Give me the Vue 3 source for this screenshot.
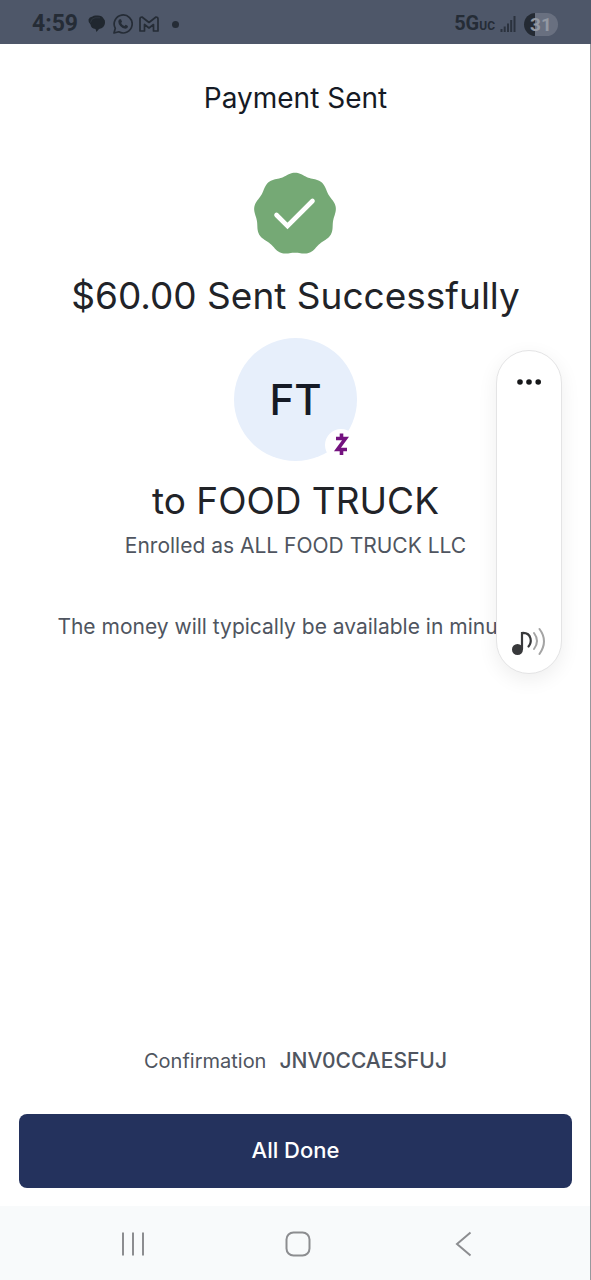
<script setup>
// Nine-lobed seal outline, sampled around the centre of an 84x84 view box
const points = []
for (let i = 0; i < 180; i++) {
  const a = (i / 180) * Math.PI * 2
  const r = 40 + 1.3 * Math.cos(9 * a)
  points.push(`${(41 + r * Math.sin(a)).toFixed(2)} ${(42 - r * Math.cos(a)).toFixed(2)}`)
}
const sealPath = `M${points.join('L')}Z`
</script>

<template>
  <div class="screen">
    <header class="status">
      <span class="time">4:59</span>
      <svg class="chat" width="20" height="20" viewBox="0 0 20 20" aria-hidden="true">
        <path d="M5.500 2.500Q7 1 10 1.500Q15 1.200 16.500 4.500Q18.500 6 18 9Q17.500 14 12 15L9.500 18L8.500 15Q4 14.500 3.500 10.500Q1 8 1.500 5.500Q2.200 3 5.500 2.500Z" fill="#20272f" />
        <path d="M3.500 8.500Q4 4.500 8 3.800H13" fill="none" stroke="#343c48" stroke-width=".7" />
      </svg>
      <svg class="phone" width="20" height="20" viewBox="0 0 20 20" aria-hidden="true">
        <path d="M1 19L2.300 14.300A9 9 0 1 1 5.800 17.800Z" fill="none" stroke="#252c36" stroke-width="1.700" stroke-linejoin="round" />
        <path d="M6.700 5.200H8L9 7.700L8.100 8.900Q9.300 11.100 11.500 12L12.700 10.800L15 12Q15 14.500 12.500 14.700Q9.500 14.500 7.200 11.900Q5.300 9.700 5.300 7.500Q5.500 5.700 6.700 5.200Z" fill="#252c36" />
      </svg>
      <svg class="mail" width="20" height="16" viewBox="0 0 20 16" aria-hidden="true">
        <path d="M1 15V3Q1 1 3 1L10 6.500L17 1Q19 1 19 3V15H14.500V8.500L10 12L5.500 8.500V15Z" fill="none" stroke="#252c36" stroke-width="1.700" stroke-linejoin="round" />
      </svg>
      <i class="dot"></i>
      <span class="network">5G<small>UC</small></span>
      <svg class="signal" width="16" height="16" viewBox="0 0 16 16" aria-hidden="true">
        <path d="M1.500 16V13M4.700 16V10.500M8 16V7.500M11.200 16V4M14.500 16V0" stroke="#2b323e" stroke-width="2" />
      </svg>
      <span class="battery">31</span>
    </header>

    <main>
      <h1>Payment Sent</h1>
      <svg class="seal" width="84" height="84" viewBox="0 0 84 84" role="img" aria-label="Success">
        <path :d="sealPath" fill="#75a975" />
        <path d="M22.500 43L33.500 54L58.500 29" fill="none" stroke="#fff" stroke-width="4.600" stroke-linecap="round" />
      </svg>
      <p class="large amount">$60.00 Sent Successfully</p>
      <div class="avatar">
        FT
        <span class="badge">
          <svg width="16" height="24" viewBox="0 0 16 24" aria-label="Zelle">
            <path d="M3 5.500H12.500L4.500 16.500H14M8.500 0.500V5M8.500 17V22" fill="none" stroke="#74127f" stroke-width="3.600" />
          </svg>
        </span>
      </div>
      <p class="large payee">to FOOD TRUCK</p>
      <p class="body">Enrolled as ALL FOOD TRUCK LLC</p>
      <p class="body notice">The money will typically be available in minutes.</p>
      <p class="confirmation"><span>Confirmation</span><b>JNV0CCAESFUJ</b></p>
      <button class="done" type="button">All Done</button>
    </main>

    <nav>
      <button type="button" aria-label="Recent apps">
        <svg width="28" height="28" viewBox="0 0 28 28"><path d="M3 2.500V25.500M13 2.500V25.500M23 2.500V25.500" stroke="#8c8d90" stroke-width="2" /></svg>
      </button>
      <button type="button" aria-label="Home">
        <svg width="28" height="28" viewBox="0 0 28 28"><rect x="2.500" y="2.500" width="23" height="23" rx="7" fill="none" stroke="#8c8d90" stroke-width="2" /></svg>
      </button>
      <button type="button" aria-label="Back">
        <svg width="28" height="28" viewBox="0 0 28 28"><path d="M22.500 2.500L9 14L22.500 25.500" fill="none" stroke="#8c8d90" stroke-width="2" /></svg>
      </button>
    </nav>

    <aside class="volume">
      <button type="button" aria-label="More volume settings">
        <svg width="26" height="8" viewBox="0 0 26 8"><g fill="#17181a"><circle cx="4" cy="4" r="2.800" /><circle cx="13" cy="4" r="2.800" /><circle cx="22.200" cy="4" r="2.800" /></g></svg>
      </button>
      <button type="button" aria-label="Media sound">
        <svg width="36" height="32" viewBox="0 0 36 32" fill="none" stroke-linecap="round">
          <circle cx="6.500" cy="23.500" r="5.500" fill="#38393b" />
          <path d="M11 23V7Q18 6.500 19.500 12.500Q20.500 17 17.500 20.500" stroke="#38393b" stroke-width="2.200" />
          <path d="M23 7Q29 15 23 23" stroke="#a4a4a4" stroke-width="2" />
          <path d="M28.500 3Q37.500 15 28.500 28" stroke="#a4a4a4" stroke-width="2" />
        </svg>
      </button>
    </aside>
  </div>
</template>

<style>
body { margin: 0; }
</style>

<style scoped>
.screen {
  position: relative;
  box-sizing: border-box;
  min-height: 100vh;
  display: flex;
  flex-direction: column;
  background: #fff;
  color: #212328;
  font-family: Inter, "Liberation Sans", sans-serif;
}
.status {
  height: 44px;
  box-sizing: border-box;
  padding: 4px 33px 0 32px;
  display: flex;
  align-items: center;
  background: #4e5769;
  color: #252c36;
}
.time { font: 700 23px/28px Roboto, sans-serif; }
.chat { margin-left: 9px; }
.phone { margin-left: 6px; }
.mail { margin-left: 6px; }
.dot { width: 7px; height: 7px; margin-left: 13px; border-radius: 50%; background: #252c36; }
.network { margin-left: auto; font: 700 20px/28px Roboto, sans-serif; }
.network small { font-size: 12px; font-weight: 700; }
.signal { margin-left: 5px; }
.battery {
  width: 34px;
  margin-left: 8px;
  border-radius: 12px;
  background: linear-gradient(90deg, #242a33 31%, #697080 31%);
  color: #9298a2;
  font: 700 19px/23px Roboto, sans-serif;
  text-align: center;
}
main {
  flex: 1;
  display: flex;
  flex-direction: column;
  align-items: center;
  padding: 36px 18px 18px 19px;
  border-right: 1px solid #97989d;
}
h1, p { margin: 0; }
h1 { font-size: 28px; font-weight: 400; line-height: 36px; color: #151a25; }
.seal { margin-top: 56px; }
.large { font-size: 37px; line-height: 48px; white-space: nowrap; }
.amount { margin-top: 16px; }
.avatar {
  position: relative;
  width: 123px;
  height: 123px;
  margin-top: 18px;
  border-radius: 50%;
  background: #e7effb;
  color: #151a25;
  font-size: 42px;
  font-weight: 500;
  line-height: 123px;
  text-align: center;
}
.badge {
  position: absolute;
  right: 0;
  bottom: 0;
  width: 32px;
  height: 32px;
  border-radius: 50%;
  background: #fff;
  display: flex;
  align-items: center;
  justify-content: center;
}
.payee { margin-top: 16px; }
.body { font-size: 21px; line-height: 28px; color: #4f5560; white-space: nowrap; }
.payee + .body { margin-top: 7px; }
.notice { margin-top: 53px; }
.confirmation {
  display: flex;
  align-items: center;
  gap: 13px;
  margin-top: auto;
  font-size: 20px;
  line-height: 28px;
  color: #4f5560;
}
.confirmation b { font-size: 21px; font-weight: 500; }
button { padding: 0; border: 0; background: none; font-family: inherit; }
.done {
  align-self: stretch;
  margin-top: 39px;
  padding: 22px 0 24px;
  border-radius: 8px;
  background: #24325d;
  color: #fff;
  font-size: 22px;
  font-weight: 500;
  line-height: 28px;
}
nav {
  height: 74px;
  box-sizing: border-box;
  padding: 2px 0 0 6px;
  display: grid;
  grid-template-columns: repeat(3, 28%);
  justify-content: center;
  background: #f8fafb;
  border-right: 1px solid #97989d;
}
nav button, .volume button { display: flex; align-items: center; justify-content: center; }
.volume {
  position: absolute;
  top: 350px;
  right: 29px;
  width: 66px;
  height: 324px;
  box-sizing: border-box;
  padding: 27px 0 15px;
  border: 1px solid #e4e4e5;
  border-radius: 33px;
  background: #fff;
  box-shadow: 0 6px 20px rgba(0, 0, 0, .07);
  display: flex;
  flex-direction: column;
  align-items: center;
  justify-content: space-between;
}
</style>
